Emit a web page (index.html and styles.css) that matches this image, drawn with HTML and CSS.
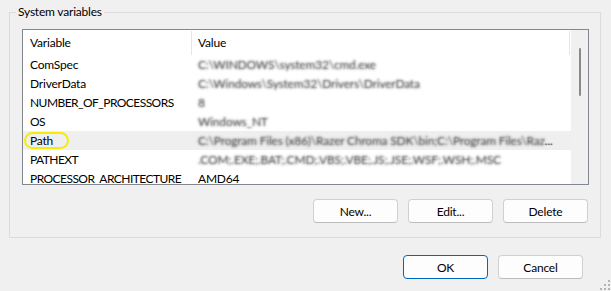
FILE: index.html
```html
<!DOCTYPE html>
<html>
<head>
<meta charset="utf-8">
<link rel="stylesheet" href="styles.css">
</head>
<body>
<div class="dialog">
  <fieldset class="group">
    <legend class="legend">System variables</legend>
    <div class="group-body">
      <div class="listbox">
        <div class="list">
          <div class="header">
            <div class="hcell c1">Variable</div>
            <div class="hcell c2">Value</div>
          </div>
          <div class="row"><div class="c1">ComSpec</div><div class="c2"><span class="val">C:\WINDOWS\system32\cmd.exe</span></div></div>
          <div class="row"><div class="c1">DriverData</div><div class="c2"><span class="val">C:\Windows\System32\Drivers\DriverData</span></div></div>
          <div class="row"><div class="c1 caps">NUMBER_OF_PROCESSORS</div><div class="c2"><span class="val">8</span></div></div>
          <div class="row"><div class="c1 caps">OS</div><div class="c2"><span class="val">Windows_NT</span></div></div>
          <div class="row selected"><div class="c1">Path<span class="mark"></span></div><div class="c2"><span class="val">C:\Program Files (x86)\Razer Chroma SDK\bin;C:\Program Files\Raz</span><span class="dots">...</span></div></div>
          <div class="row"><div class="c1 caps">PATHEXT</div><div class="c2"><span class="val">.COM;.EXE;.BAT;.CMD;.VBS;.VBE;.JS;.JSE;.WSF;.WSH;.MSC</span></div></div>
          <div class="row"><div class="c1 caps">PROCESSOR_ARCHITECTURE</div><div class="c2">AMD64</div></div>
        </div>
        <div class="scrollbar"><div class="thumb"></div></div>
      </div>
      <div class="btnrow">
        <button class="btn">New...</button>
        <button class="btn">Edit...</button>
        <button class="btn">Delete</button>
      </div>
    </div>
  </fieldset>
  <div class="footer">
    <button class="btn primary">OK</button>
    <button class="btn">Cancel</button>
  </div>
  <svg class="grip" width="10" height="10" viewBox="0 0 10 10">
    <rect x="8" y="0" width="2" height="2" fill="#b4b4b4"/>
    <rect x="4" y="4" width="2" height="2" fill="#b4b4b4"/>
    <rect x="8" y="4" width="2" height="2" fill="#b4b4b4"/>
    <rect x="0" y="8" width="2" height="2" fill="#b4b4b4"/>
    <rect x="4" y="8" width="2" height="2" fill="#b4b4b4"/>
    <rect x="8" y="8" width="2" height="2" fill="#b4b4b4"/>
  </svg>
</div>
</body>
</html>
```
FILE: styles.css
```css
html, body {
  margin: 0;
  padding: 0;
  background: #f0f0f0;
}
body {
  font-family: "Lato", "Liberation Sans", sans-serif;
  font-size: 12px;
  letter-spacing: -0.2px;
  color: #000;
}
.dialog {
  position: relative;
  width: 611px;
  height: 291px;
  overflow: hidden;
}
.group {
  margin: 4px 10px 0 9px;
  padding: 0;
  border: 1px solid #dcdcdc;
  min-inline-size: 0;
}
.legend {
  margin-left: 6px;
  padding: 0 2px;
  line-height: 16px;
  font-size: 12px;
}
.group-body {
  padding: 9px 11px 14px 12px;
}
.listbox {
  display: flex;
  height: 156px;
  box-sizing: border-box;
  border: 1px solid #828790;
  background: #fff;
}
.list {
  flex: 1;
  overflow: hidden;
  min-width: 0;
}
.header {
  display: flex;
  height: 25px;
  padding: 1px 1px 0 0;
  box-sizing: border-box;
}
.hcell {
  display: flex;
  align-items: center;
  border-right: 1px solid #e5e5e5;
  padding-bottom: 1px;
}
.c1 {
  position: relative;
  width: 169px;
  flex: none;
  box-sizing: border-box;
  padding-left: 7px;
  white-space: nowrap;
}
.caps {
  letter-spacing: -0.55px;
}
.c2 {
  flex: 1;
  min-width: 0;
  padding-left: 6px;
  white-space: nowrap;
  overflow: hidden;
}
.row {
  display: flex;
  height: 19px;
  line-height: 19px;
}
.row.selected {
  background: #efefef;
}
.val {
  color: transparent;
  text-shadow: 0 0 2.5px rgba(40, 40, 40, 0.95);
}
.dots {
  color: transparent;
  text-shadow: 0 0 1px #222;
}
.mark {
  position: absolute;
  left: 1px;
  top: 1px;
  width: 45px;
  height: 17px;
  box-sizing: border-box;
  border: 2px solid #f5ee00;
  border-radius: 9px;
}
.scrollbar {
  width: 17px;
  flex: none;
  background: #f0f0f0;
  position: relative;
}
.thumb {
  position: absolute;
  left: 8px;
  top: 18px;
  width: 2px;
  height: 48px;
  border-radius: 1px;
  background: #8a8a8a;
}
.btnrow {
  display: flex;
  justify-content: flex-end;
  gap: 10px;
  margin-top: 14px;
  margin-right: 1px;
}
.btn {
  width: 85px;
  height: 24px;
  box-sizing: border-box;
  border: 1px solid #d0d0d0;
  border-bottom-color: #bcbcbc;
  border-radius: 4px;
  background: #fdfdfd;
  font-family: "Lato", "Liberation Sans", sans-serif;
  font-size: 12px;
  letter-spacing: -0.2px;
  color: #000;
  padding: 0;
}
.btn.primary {
  border: 1px solid #0067c0;
}
.footer {
  display: flex;
  justify-content: flex-end;
  gap: 10px;
  margin-top: 17px;
  padding-right: 28px;
}
.grip {
  position: absolute;
  right: 1px;
  bottom: 1px;
}
```
